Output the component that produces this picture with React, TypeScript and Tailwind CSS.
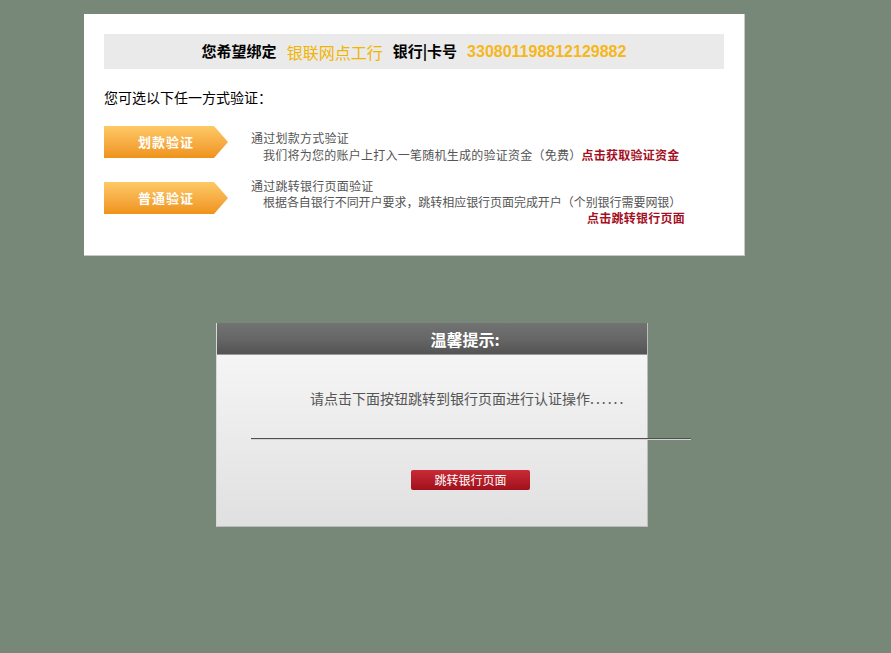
const ROWS = [
  {
    label: "划款验证",
    title: "通过划款方式验证",
    desc: "我们将为您的账户上打入一笔随机生成的验证资金（免费）",
    link: "点击获取验证资金",
  },
  {
    label: "普通验证",
    title: "通过跳转银行页面验证",
    desc: "根据各自银行不同开户要求，跳转相应银行页面完成开户（个别银行需要网银）",
    link: "点击跳转银行页面",
  },
];

function ArrowButton({ label }: { label: string }) {
  return (
    <div className="flex h-[32px] w-[124px] shrink-0 items-center justify-center bg-gradient-to-b from-[#fdc965] to-[#ef9318] text-[13px] font-bold tracking-[1px] text-white [clip-path:polygon(0_0,110px_0,124px_50%,110px_100%,0_100%)]">
      {label}
    </div>
  );
}

export default function App() {
  return (
    <div
      className="min-h-[653px] bg-[#778879] pt-[14px] pl-[84px]"
      style={{ fontFamily: '"Noto Sans CJK SC", "Liberation Sans", sans-serif' }}
    >
      <div className="w-[661px] border-r border-b border-[#c8c8c8] bg-white px-[20px] pt-[20px] pb-[29px]">
        <div className="flex h-[35px] items-center justify-center gap-[10px] bg-[#eaeaea] text-[15px] font-bold text-black">
          <span>您希望绑定</span>
          <span className="text-[16px] font-normal text-[#f2b400]">银联网点工行</span>
          <span>银行|卡号</span>
          <span className="font-['Liberation_Sans'] text-[16px] text-[#f5b71c]">330801198812129882</span>
        </div>

        <p className="mt-[19px] text-[14px] leading-[18px] text-black">您可选以下任一方式验证：</p>

        <div className="mt-[20px] flex items-start">
          <ArrowButton label={ROWS[0].label} />
          <div className="ml-[23px] mt-[3px] whitespace-nowrap text-[12px] leading-[17px] tracking-[0.25px] text-[#555]">
            <div>{ROWS[0].title}</div>
            <div className="pl-[12px]">
              {ROWS[0].desc}
              <span className="font-bold text-[#a3101f]">{ROWS[0].link}</span>
            </div>
          </div>
        </div>

        <div className="mt-[19px] flex items-start">
          <ArrowButton label={ROWS[1].label} />
          <div className="ml-[23px] mt-[-4px] w-[434px] whitespace-nowrap text-[12px] leading-[16px] text-[#555]">
            <div className="tracking-[0.25px]">{ROWS[1].title}</div>
            <div className="pl-[12px] tracking-[-0.05px]">{ROWS[1].desc}</div>
            <div className="text-right font-bold tracking-[0.25px] text-[#a3101f]">{ROWS[1].link}</div>
          </div>
        </div>
      </div>

      <div className="ml-[132px] mt-[67px] w-[432px] border border-t-0 border-[#bdbdbd] border-l-[#d8d8d8]">
        <div className="flex h-[32px] items-center justify-center bg-gradient-to-b from-[#727272] via-[#666] to-[#525252] pl-[66px] text-[16px] font-bold text-white shadow-[inset_0_-1px_0_#9a9a9a]">
          温馨提示:
        </div>
        <div className="h-[171px] bg-gradient-to-b from-[#f5f5f5] to-[#e0e0e0] pt-[33px]">
          <p className="pl-[93px] text-[14px] leading-[20px] text-[#555]">
            请点击下面按钮跳转到银行页面进行认证操作<span className="tracking-[2px]">......</span>
          </p>
          <div className="ml-[34px] mt-[30px] h-[2px] w-[440px] border-t border-[#505050] bg-[#d4d4d4]" />
          <div className="mt-[30px] pl-[194px]">
            <button
              type="button"
              className="flex h-[20px] w-[119px] items-center justify-center rounded-[2px] bg-gradient-to-b from-[#c92a36] to-[#a0101c] text-[12px] text-white"
            >
              跳转银行页面
            </button>
          </div>
        </div>
      </div>
    </div>
  );
}
